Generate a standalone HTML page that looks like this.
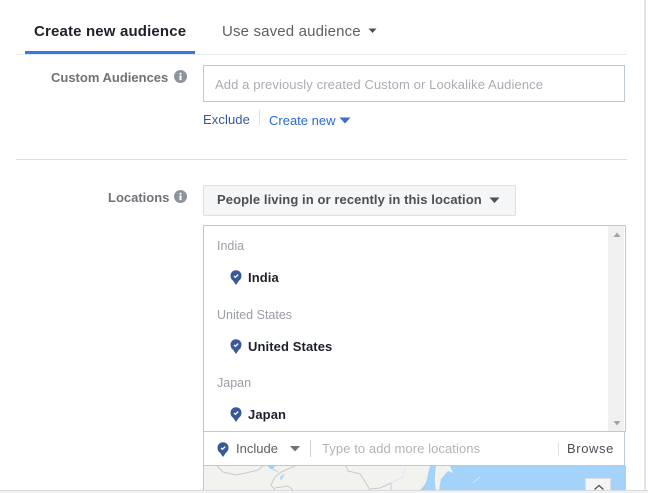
<!DOCTYPE html>
<html><head><meta charset="utf-8"><style>
html,body{margin:0;padding:0;background:#fff}
body{width:648px;height:493px;position:relative;overflow:hidden;font-family:"Liberation Sans",sans-serif;font-size:13px}
.a{position:absolute;white-space:nowrap}
.b{position:absolute}
.g{color:#9a9ea6;font-size:12.5px}
.n{color:#1d2129;font-weight:bold;font-size:13px;letter-spacing:.1px}
.lbl{color:#6f7278;font-weight:bold;font-size:13px;text-align:right}
</style></head><body>
<div class="a" style="left:34px;top:23px;font-size:15px;font-weight:bold;color:#1d2129;letter-spacing:.16px">Create new audience</div>
<div class="a" style="left:222px;top:23px;font-size:15px;color:#5c5f66;letter-spacing:.16px">Use saved audience</div>
<svg class="b" style="left:368px;top:28px" width="9" height="6"><path d="M0.5 0.5H8.5L4.5 5Z" fill="#4b4f56"/></svg>
<div class="b" style="left:16px;top:54px;width:611px;height:1px;background:#e9eaed"></div>
<div class="b" style="left:25px;top:51px;width:170px;height:3px;background:#3578e5"></div>

<div class="a lbl" style="left:51px;top:70px">Custom Audiences</div>
<svg class="b" style="left:174px;top:70px" width="13" height="13"><circle cx="6.5" cy="6.5" r="6.5" fill="#8d949e"/><rect x="5.5" y="5.5" width="2" height="4.6" fill="#fff"/><rect x="5.5" y="2.8" width="2" height="1.8" fill="#fff"/></svg>
<div class="b" style="left:203px;top:65px;width:420px;height:35px;border:1px solid #bdc7d8"></div>
<div class="a" style="left:215px;top:77px;font-size:13px;color:#a9acb2;letter-spacing:.11px">Add a previously created Custom or Lookalike Audience</div>
<div class="a" style="left:203px;top:112px;font-size:13px;color:#365899;letter-spacing:.1px">Exclude</div>
<div class="b" style="left:259px;top:110px;width:1px;height:15px;background:#dddfe2"></div>
<div class="a" style="left:269px;top:113px;font-size:13px;color:#2a6ad0">Create new</div>
<svg class="b" style="left:339px;top:117px" width="12" height="7"><path d="M0.5 0.5H11.5L6 6.5Z" fill="#3a6fc4"/></svg>

<div class="b" style="left:16px;top:159px;width:611px;height:1px;background:#dddfe2"></div>

<div class="a lbl" style="left:108px;top:190px">Locations</div>
<svg class="b" style="left:174px;top:190px" width="13" height="13"><circle cx="6.5" cy="6.5" r="6.5" fill="#8d949e"/><rect x="5.5" y="5.5" width="2" height="4.6" fill="#fff"/><rect x="5.5" y="2.8" width="2" height="1.8" fill="#fff"/></svg>
<div class="b" style="left:203px;top:185px;width:311px;height:29px;background:#f5f6f7;border:1px solid #dddfe2;border-radius:2px"></div>
<div class="a" style="left:217px;top:192px;font-size:13px;font-weight:bold;color:#4b4f56;letter-spacing:.09px">People living in or recently in this location</div>
<svg class="b" style="left:489px;top:197px" width="11" height="7"><path d="M0.5 0.5H10.5L5.5 6Z" fill="#4b4f56"/></svg>

<div class="b" style="left:203px;top:225px;width:421px;height:206px;border:1px solid #c4c4c4;border-bottom:0"></div>
<div class="b" style="left:608px;top:226px;width:16px;height:205px;background:#f0f0f0"></div>
<svg class="b" style="left:613px;top:232px" width="8" height="6"><path d="M4 0.5L7.5 5H0.5Z" fill="#a3a3a3"/></svg>
<svg class="b" style="left:613px;top:420px" width="8" height="6"><path d="M0.5 1H7.5L4 5.5Z" fill="#a3a3a3"/></svg>

<div class="a g" style="left:217px;top:239px">India</div>
<svg class="b" style="left:230px;top:270px" width="12" height="15" viewBox="0 0 12 15"><path d="M6 15L3 10.6C1.3 9.5 .5 7.6 .5 5.7A5.5 5.5 0 1 1 11.5 5.7C11.5 7.6 10.7 9.5 9 10.6Z" fill="#3b5998"/><path d="M4 5.9L5.4 7.3L8.2 4.6" fill="none" stroke="#fff" stroke-width="1.3"/></svg>
<div class="a n" style="left:248px;top:270px">India</div>

<div class="a g" style="left:217px;top:308px">United States</div>
<svg class="b" style="left:230px;top:339px" width="12" height="15" viewBox="0 0 12 15"><path d="M6 15L3 10.6C1.3 9.5 .5 7.6 .5 5.7A5.5 5.5 0 1 1 11.5 5.7C11.5 7.6 10.7 9.5 9 10.6Z" fill="#3b5998"/><path d="M4 5.9L5.4 7.3L8.2 4.6" fill="none" stroke="#fff" stroke-width="1.3"/></svg>
<div class="a n" style="left:248px;top:339px">United States</div>

<div class="a g" style="left:217px;top:376px">Japan</div>
<svg class="b" style="left:230px;top:407px" width="12" height="15" viewBox="0 0 12 15"><path d="M6 15L3 10.6C1.3 9.5 .5 7.6 .5 5.7A5.5 5.5 0 1 1 11.5 5.7C11.5 7.6 10.7 9.5 9 10.6Z" fill="#3b5998"/><path d="M4 5.9L5.4 7.3L8.2 4.6" fill="none" stroke="#fff" stroke-width="1.3"/></svg>
<div class="a n" style="left:248px;top:407px">Japan</div>

<div class="b" style="left:203px;top:431px;width:420px;height:33px;border:1px solid #bdc7d8;background:#fff"></div>
<svg class="b" style="left:217px;top:442px" width="12" height="15" viewBox="0 0 12 15"><path d="M6 15L3 10.6C1.3 9.5 .5 7.6 .5 5.7A5.5 5.5 0 1 1 11.5 5.7C11.5 7.6 10.7 9.5 9 10.6Z" fill="#3b5998"/><path d="M4 5.9L5.4 7.3L8.2 4.6" fill="none" stroke="#fff" stroke-width="1.3"/></svg>
<div class="a" style="left:236px;top:441px;font-size:13px;color:#5c5f66;letter-spacing:0">Include</div>
<svg class="b" style="left:290px;top:446px" width="10" height="6"><path d="M0 0H10L5 5.5Z" fill="#6f7278"/></svg>
<div class="b" style="left:310px;top:440px;width:1px;height:17px;background:#ced0d4"></div>
<div class="a" style="left:322px;top:441px;font-size:13px;color:#b0b3b8;letter-spacing:.08px">Type to add more locations</div>
<div class="b" style="left:558px;top:442px;width:1px;height:14px;background:#e0e1e4"></div>
<div class="a" style="left:567px;top:441px;font-size:13px;color:#4b4f56;letter-spacing:.6px">Browse</div>

<svg class="b" style="left:203px;top:466px" width="423" height="24" viewBox="0 0 423 24">
<rect width="423" height="24" fill="#f2f2ef"/>
<path d="M217 24C222 19 224 16 225 8L227 0H423V24Z" fill="#a3d2fb"/>
<path d="M233 0H247L250 7L245 5L238 13L236 24H233C231 15 232 8 233 0Z" fill="#f2f2ef"/>
<path d="M14 0L20 6L33 9L43 7L55 4L60 0M65 0L75 6M92 0L78 6L72 11L68 19L72 24M72 22L85 20L90 24M143 0L145 5L157 8L163 17L167 24M167 23L177 22L188 17V24" fill="none" stroke="#c9c9cb" stroke-width="1"/>
<path d="M188 17L200 11L202 2" fill="none" stroke="#d8e8f8" stroke-width="1"/>
<path d="M65 0H72L70 3H67Z" fill="#a3d2fb"/><path d="M77 11L82 7L78 15Z" fill="#a3d2fb"/>
<path d="M270 17L277 11" stroke="#cfe6fb" stroke-width="1"/>
<rect y="0" width="1" height="24" fill="#bdc7d8"/>
</svg>
<div class="b" style="left:585px;top:478px;width:26px;height:12px;background:#f5f5f5;border:1px solid #dcdcdc;border-bottom:0;box-sizing:border-box"></div>
<svg class="b" style="left:593px;top:484px" width="12" height="6"><path d="M1.5 5.5L6 1.5L10.5 5.5" fill="none" stroke="#555" stroke-width="1.3"/></svg>

<div class="b" style="left:644px;top:0;width:2px;height:490px;background:#e4e5e7"></div>
<div class="b" style="left:0;top:490px;width:648px;height:1px;background:#d8d9dc"></div>
<div class="b" style="left:0;top:491px;width:648px;height:2px;background:#f3f3f4"></div>
</body></html>
